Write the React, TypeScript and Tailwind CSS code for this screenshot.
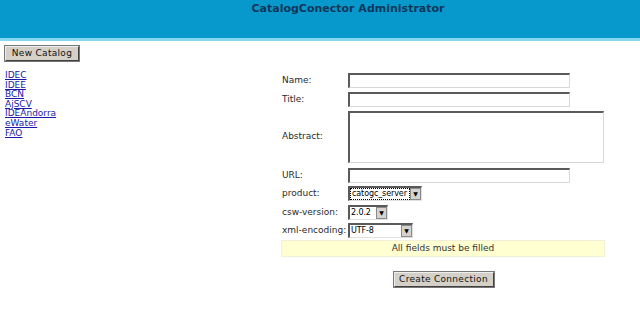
const catalogs = ["IDEC", "IDEE", "BCN", "AjSCV", "IDEAndorra", "eWater", "FAO"];

const font = "font-['DejaVu_Sans',Verdana,sans-serif]";

function TextInput({ wide = false, tall = false }: { wide?: boolean; tall?: boolean }) {
  return (
    <div
      className={`${wide ? "w-[256px]" : "w-[222px]"} ${tall ? "h-[52px]" : "h-[15px]"} border-t-2 border-l-2 border-b border-r border-t-[#5a5a5a] border-l-[#5a5a5a] border-b-[#d8d8d8] border-r-[#d8d8d8] bg-white`}
    />
  );
}

function Select({ value, width, focused = false }: { value: string; width: string; focused?: boolean }) {
  return (
    <div
      className={`flex h-[15px] ${width} items-stretch border-t-2 border-l-2 border-b border-r border-t-[#5a5a5a] border-l-[#5a5a5a] border-b-[#e0e0e0] border-r-[#e0e0e0] bg-white`}
    >
      <span
        className={`flex flex-1 items-center whitespace-nowrap pl-[1px] text-[8px] leading-none tracking-[-0.1px] text-black ${focused ? "border border-dotted border-black" : ""}`}
      >
        {value}
      </span>
      <span className="ml-auto flex w-[11px] shrink-0 items-center justify-center border border-[#8a8a8a] bg-[#d6d3ce] text-[6px] leading-none text-black">
        ▼
      </span>
    </div>
  );
}

function Row({ label, children, className = "" }: { label: string; children: React.ReactNode; className?: string }) {
  return (
    <div className={`flex items-center ${className}`}>
      <span className="w-[67px] pl-[1px] text-[9px] text-[#2a2a2a]">{label}</span>
      {children}
    </div>
  );
}

export default function App() {
  return (
    <div className={`h-[324px] w-[640px] overflow-hidden bg-white ${font}`}>
      <header className="h-[41px] border-b-[3px] border-b-[#86d6ee] bg-[#0799cc] pl-[56px] text-center">
        <h1 className="pt-[1px] text-[11px] font-bold text-[#12365a]">CatalogConector Administrator</h1>
      </header>

      <div className="flex">
        <aside className="w-[281px] pl-[5px] pt-[5px]">
          <button className="block h-[15px] w-[74px] border border-t-[#eee] border-l-[#eee] border-b-[#404040] border-r-[#404040] bg-[#d4d0c8] text-[9px] leading-none tracking-[0.3px] text-[#111] outline outline-1 outline-[#777]">
            New Catalog
          </button>
          <ul className="mt-[10px] flex flex-col">
            {catalogs.map(c => (
              <li key={c} className="h-[9.6px] text-[9px] leading-[9.6px]">
                <a href="#" className="text-[#1a1aa8] underline">
                  {c}
                </a>
              </li>
            ))}
          </ul>
        </aside>

        <main className="w-[324px] pt-[32px]">
          <div className="flex flex-col">
            <Row label="Name:">
              <TextInput />
            </Row>
            <Row label="Title:" className="mt-[4px]">
              <TextInput />
            </Row>
            <Row label="Abstract:" className="mt-[4px]">
              <TextInput wide tall />
            </Row>
            <Row label="URL:" className="mt-[5px]">
              <TextInput />
            </Row>
            <Row label="product:" className="mt-[3px]">
              <Select value="catogc_server" width="w-[74px]" focused />
            </Row>
            <Row label="csw-version:" className="mt-[4px]">
              <Select value="2.0.2" width="w-[40px]" />
            </Row>
            <Row label="xml-encoding:" className="mt-[3px]">
              <Select value="UTF-8" width="w-[65px]" />
            </Row>
            <div className="mt-[2px] flex h-[17px] items-center justify-center border border-[#f0efd8] bg-[#ffffd2] text-[9px] text-[#333]">
              All fields must be filled
            </div>
            <div className="mt-[15px] flex justify-center pl-[1px]">
              <button className="h-[15px] w-[100px] border border-t-[#eee] border-l-[#eee] border-b-[#404040] border-r-[#404040] bg-[#d4d0c8] text-[9px] leading-none tracking-[0.3px] text-[#111] outline outline-1 outline-[#777]">
                Create Connection
              </button>
            </div>
          </div>
        </main>
      </div>
    </div>
  );
}
